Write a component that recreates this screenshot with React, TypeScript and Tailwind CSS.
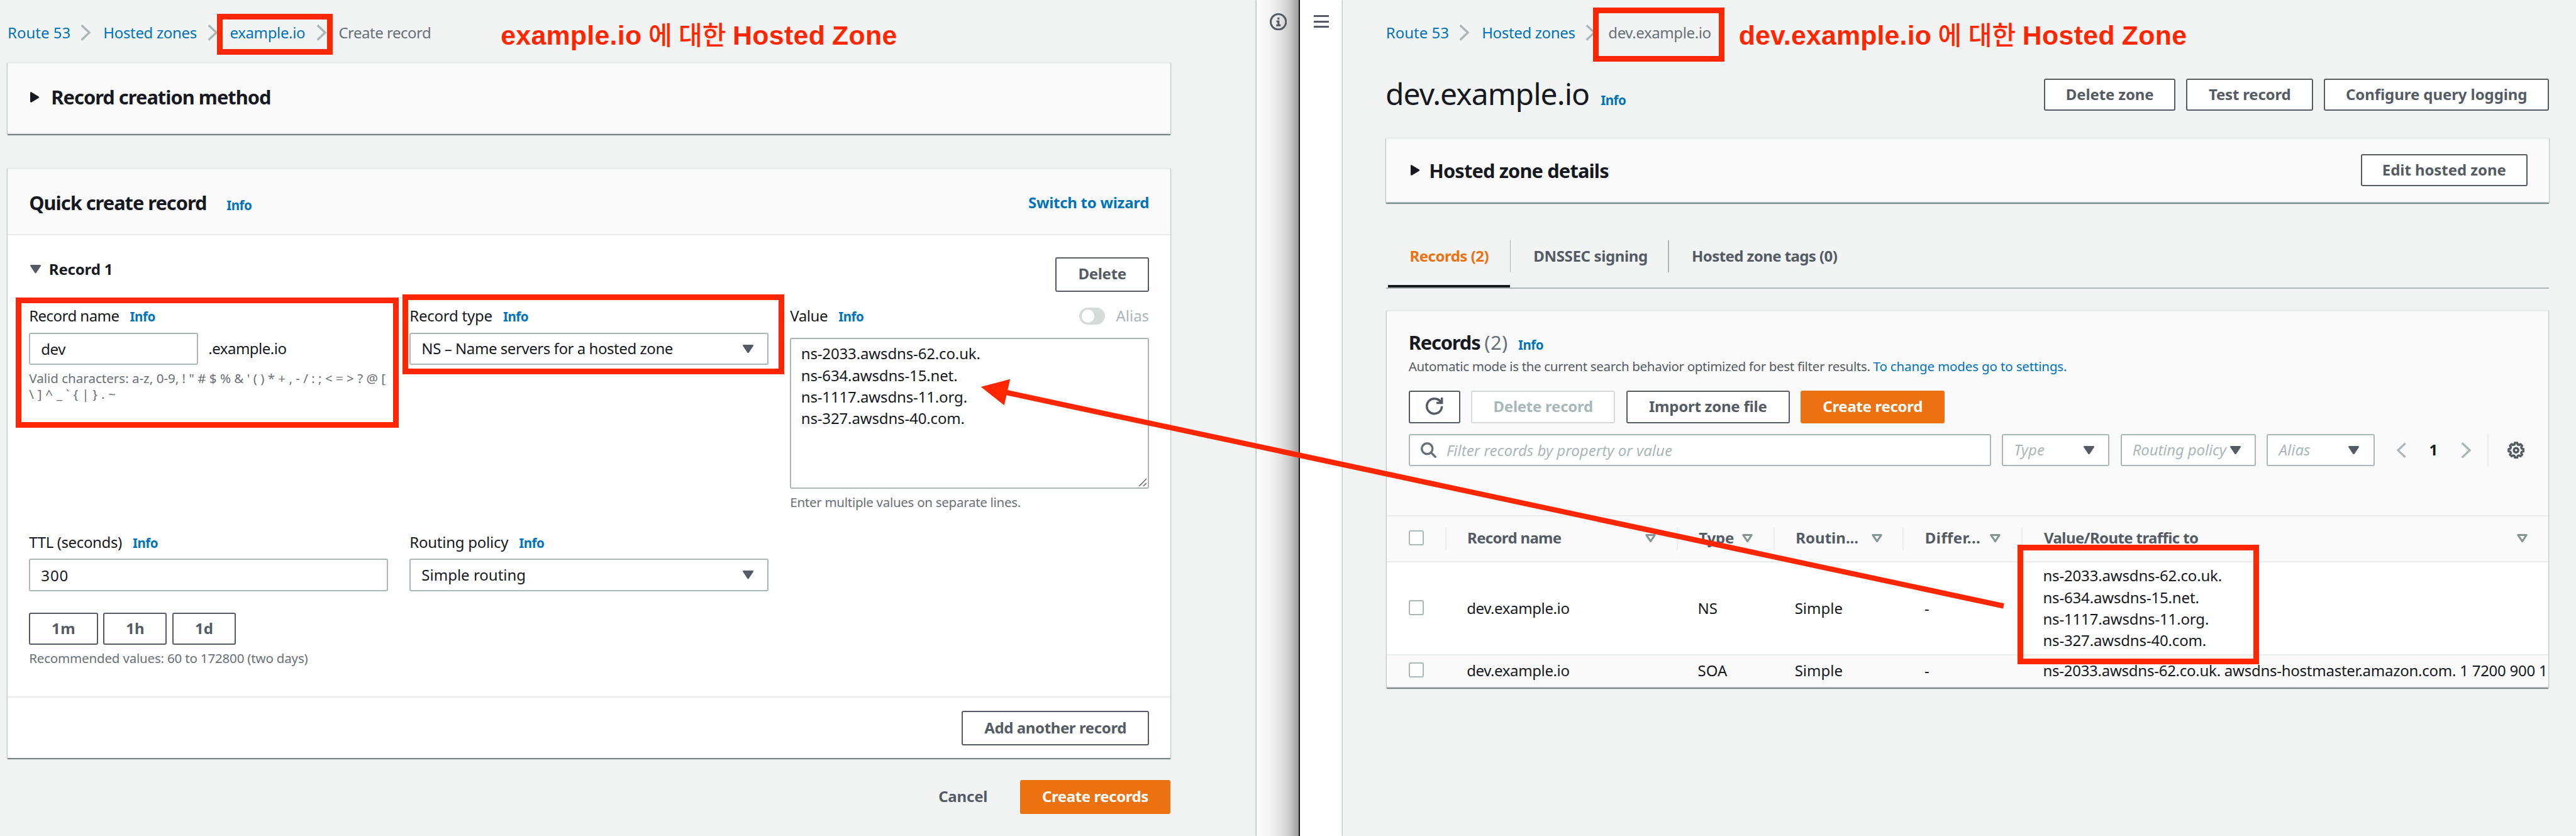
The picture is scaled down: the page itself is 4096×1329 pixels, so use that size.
import React from "react";
import type { ReactNode } from "react";

/* The page sets --spacing to 0.856187px, so one step of the spacing scale is one canvas unit. */

const NAME_SERVERS = [
  "ns-2033.awsdns-62.co.uk.",
  "ns-634.awsdns-15.net.",
  "ns-1117.awsdns-11.org.",
  "ns-327.awsdns-40.com.",
];

/* ---------- icons ---------- */

function ChevronRight({ className = "" }: { className?: string }) {
  return (
    <svg viewBox="0 0 20 30" className={`h-30 w-20 shrink-0 ${className}`} fill="none" stroke="#aab7b8" strokeWidth="4">
      <path d="M2 1.4 16.4 15 2 28.6" />
    </svg>
  );
}

function ChevronLeft() {
  return (
    <svg viewBox="0 0 20 30" className="h-30 w-19 shrink-0" fill="none" stroke="#aab7b8" strokeWidth="4">
      <path d="M18 1.4 3.6 15 18 28.6" />
    </svg>
  );
}

function CaretDown({ className = "" }: { className?: string }) {
  return (
    <svg viewBox="0 0 20 16" className={`h-16 w-20 shrink-0 ${className}`} fill="#545b64" stroke="#545b64" strokeWidth="3" strokeLinejoin="round">
      <path d="M1.6 1.5h16.8L10 14.2z" />
    </svg>
  );
}

function CaretRight() {
  return (
    <svg viewBox="0 0 17 20" className="h-20 w-17 shrink-0" fill="#16191f" stroke="#16191f" strokeWidth="3" strokeLinejoin="round">
      <path d="M1.5 1.8v16.4L15 10z" />
    </svg>
  );
}

function SortIcon() {
  return (
    <svg viewBox="0 0 20 16" className="h-16 w-20 shrink-0" fill="none" stroke="#879596" strokeWidth="3.6" strokeLinejoin="round">
      <path d="M2.2 1.8h15.6L10 13.6z" />
    </svg>
  );
}

function InfoIcon() {
  return (
    <svg viewBox="0 0 16 16" className="size-32" fill="none" stroke="#545b64" strokeWidth="1.8">
      <circle cx="8" cy="8" r="7.1" />
      <path d="M6.2 7.6H8.1V11.2M6 11.2h4.1M7.2 4.9h1.8" />
    </svg>
  );
}

function RefreshIcon() {
  return (
    <svg viewBox="0 0 16 16" className="size-32" fill="none" stroke="#545b64" strokeWidth="2">
      <path d="M10 5h5V0" />
      <path d="M15 8a6.957 6.957 0 0 1-7 7 6.957 6.957 0 0 1-7-7 6.957 6.957 0 0 1 7-7 6.87 6.87 0 0 1 6.3 4" />
    </svg>
  );
}

function SearchIcon() {
  return (
    <svg viewBox="0 0 30 30" className="size-30 shrink-0" fill="none" stroke="#687078" strokeWidth="4">
      <circle cx="12" cy="12" r="10" />
      <path d="m18.6 18.6 9.8 9.8" />
    </svg>
  );
}

const GEAR_POINTS = Array.from({ length: 8 }, (_, i) => i * 45)
  .flatMap((a) => [
    [11, a - 15],
    [14, a - 9],
    [14, a + 9],
    [11, a + 15],
  ])
  .map(([r, deg]) => {
    const t = (deg * Math.PI) / 180;
    return `${(16 + r * Math.cos(t)).toFixed(2)},${(16 + r * Math.sin(t)).toFixed(2)}`;
  })
  .join(" ");

function GearIcon() {
  return (
    <svg viewBox="0 0 32 32" className="size-32 shrink-0" fill="none" stroke="#545b64" strokeWidth="4" strokeLinejoin="round">
      <polygon points={GEAR_POINTS} />
      <circle cx="16" cy="16" r="4.1" />
    </svg>
  );
}

/* ---------- small pieces ---------- */

function Info({ className = "" }: { className?: string }) {
  return <span className={`text-[20.55px] font-bold tracking-[-0.5px] text-[#0073bb] ${className}`}>Info</span>;
}

const BUTTON_TONES = {
  normal: "border-[#545b64] bg-white text-[#545b64]",
  disabled: "border-[#d5dbdb] bg-white text-[#aab7b8]",
  primary: "border-[#ec7211] bg-[#ec7211] text-white",
};

function Button({
  children,
  tone = "normal",
  className = "h-60",
}: {
  children: ReactNode;
  tone?: keyof typeof BUTTON_TONES;
  className?: string;
}) {
  return (
    <button className={`flex shrink-0 items-center justify-center rounded-[3px] border-2 pb-2 font-bold ${BUTTON_TONES[tone]} ${className}`}>
      {children}
    </button>
  );
}

function Select({ children, className = "" }: { children: ReactNode; className?: string }) {
  return (
    <div className={`flex h-60 items-center justify-between rounded-[3px] border-2 border-[#aab7b8] bg-white pr-26 pl-20 ${className}`}>
      {children}
      <CaretDown />
    </div>
  );
}

function Card({ children, className = "" }: { children: ReactNode; className?: string }) {
  return (
    <section className={`border-t-2 border-[#eaeded] bg-white shadow-[0_2px_1px_0_rgba(0,28,36,0.42),1px_1px_2px_0_rgba(0,28,36,0.18),-1px_1px_2px_0_rgba(0,28,36,0.18)] ${className}`}>
      {children}
    </section>
  );
}

function Label({ children }: { children: ReactNode }) {
  return <div className="flex h-44 items-baseline gap-20 leading-44">{children}</div>;
}

function Checkbox() {
  return <span className="block size-28 rounded-[3px] border-2 border-[#aab7b8] bg-white" />;
}

/* ---------- left window: record form ---------- */

function RecordForm() {
  return (
    <main className="w-2334 shrink-0 bg-[#f2f3f3] pt-39 pl-14">
      <nav className="flex h-44 items-center leading-44">
        <a className="w-118 text-[#0073bb]">Route 53</a>
        <ChevronRight className="mr-22 ml-18" />
        <a className="w-175 tracking-[-0.35px] text-[#0073bb]">Hosted zones</a>
        <ChevronRight className="mr-22 ml-18" />
        <a className="w-142 tracking-[-0.37px] text-[#0073bb]">example.io</a>
        <ChevronRight className="mr-22 ml-18" />
        <span className="tracking-[-0.5px] text-[#687078]">Create record</span>
      </nav>

      <Card className="mt-33 w-2160">
        <div className="flex h-130 items-center gap-22 border-b-2 border-[#eaeded] bg-[#fafafa] pb-4 pl-42">
          <CaretRight />
          <h2 className="text-[30.8px] font-bold tracking-[-0.97px]">Record creation method</h2>
        </div>
      </Card>

      <Card className="mt-64 w-2160">
        <header className="flex h-122 items-center justify-between border-b-2 border-[#eaeded] bg-[#fafafa] px-40 pt-3">
          <div className="flex items-baseline gap-37">
            <h2 className="text-[30.8px] font-bold tracking-[-1.01px]">Quick create record</h2>
            <Info />
          </div>
          <a className="font-bold tracking-[-0.28px] text-[#0073bb]">Switch to wizard</a>
        </header>

        <div className="px-40 pt-41 pb-56">
          <div className="flex h-64 items-start justify-between">
            <div className="flex items-center gap-15 pl-2 leading-44">
              <CaretDown />
              <h3 className="font-bold tracking-[-0.18px]">Record 1</h3>
            </div>
            <Button className="h-64 w-174 tracking-[-0.29px]">Delete</Button>
          </div>

          <div className="mt-23 grid grid-cols-3 gap-x-40">
            <div>
              <Label>
                <span className="tracking-[-0.54px]">Record name</span>
                <Info />
              </Label>
              <div className="mt-9 flex h-60 items-center">
                <div className="flex h-60 w-314 items-center rounded-[3px] border-2 border-[#aab7b8] bg-white pt-2 pl-20 tracking-[-0.5px]">dev</div>
                <span className="ml-19 tracking-[-0.51px]">.example.io</span>
              </div>
              <p className="mt-10 text-[20.55px] leading-30 text-[#687078]">
                {"Valid characters: a-z, 0-9, ! \" # $ % & ' ( ) * + , - / : ; < = > ? @ ["}
                <br />
                <span className="tracking-[0.25px]">{"\\ ] ^ _ ` { | } . ~"}</span>
              </p>
            </div>

            <div>
              <Label>
                <span className="tracking-[-0.23px]">Record type</span>
                <Info />
              </Label>
              <Select className="mt-9">
                <span className="tracking-[-0.44px]">NS – Name servers for a hosted zone</span>
              </Select>
            </div>

            <div>
              <div className="flex items-center justify-between">
                <Label>
                  <span className="tracking-[-0.42px]">Value</span>
                  <Info />
                </Label>
                <div className="flex items-center gap-20 text-[#aab7b8]">
                  <span className="flex h-32 w-48 items-center rounded-full bg-[#d5dbdb] pl-4">
                    <span className="size-24 rounded-full bg-white" />
                  </span>
                  Alias
                </div>
              </div>
              <div className="mt-19 flex h-280 items-start justify-between rounded-[3px] border-2 border-[#aab7b8] bg-white pt-7 pl-18">
                <div className="leading-40 tracking-[-0.14px]">
                  {NAME_SERVERS.map((ns) => (
                    <div key={ns}>{ns}</div>
                  ))}
                </div>
                <svg viewBox="0 0 16 16" className="mr-2 mb-2 size-16 self-end" stroke="#545b64" strokeWidth="1.6">
                  <path d="M1 15.5 15.5 1M9 15.5l6.5-6.5" />
                </svg>
              </div>
              <p className="mt-10 text-[20.55px] leading-30 tracking-[-0.3px] text-[#687078]">Enter multiple values on separate lines.</p>
            </div>
          </div>

          <div className="mt-37 grid grid-cols-3 gap-x-40">
            <div>
              <Label>
                <span className="tracking-[-0.38px]">TTL (seconds)</span>
                <Info />
              </Label>
              <div className="mt-9 flex h-60 items-center rounded-[3px] border-2 border-[#aab7b8] bg-white pt-2 pl-20 tracking-[0.9px]">300</div>
              <div className="mt-40 flex gap-10">
                <Button className="h-60 w-128 tracking-[0.4px]">1m</Button>
                <Button className="h-60 w-118">1h</Button>
                <Button className="h-60 w-118">1d</Button>
              </div>
              <p className="mt-10 text-[20.55px] leading-30 tracking-[-0.2px] text-[#687078]">Recommended values: 60 to 172800 (two days)</p>
            </div>
            <div>
              <Label>
                <span className="tracking-[-0.25px]">Routing policy</span>
                <Info />
              </Label>
              <Select className="mt-9">Simple routing</Select>
            </div>
          </div>
        </div>

        <footer className="flex justify-end border-t-2 border-[#eaeded] px-40 py-24">
          <Button className="h-64 w-348 tracking-[-0.39px]">Add another record</Button>
        </footer>
      </Card>

      <div className="mt-40 flex w-2160 items-center justify-end gap-60 font-bold">
        <span className="pb-2 tracking-[-0.19px] text-[#545b64]">Cancel</span>
        <Button tone="primary" className="h-64 w-280 tracking-[-0.42px]">
          Create records
        </Button>
      </div>
    </main>
  );
}

/* ---------- right window: hosted zone ---------- */

function HeaderCell({ children, className = "border-r-2" }: { children: ReactNode; className?: string }) {
  return (
    <div className={`flex h-42 items-center justify-between border-[#eaeded] pr-38 pb-3 pl-39 ${className}`}>
      {children}
      <SortIcon />
    </div>
  );
}

function RecordRow({ type, value, className = "" }: { type: string; value: ReactNode; className?: string }) {
  return (
    <div className={`grid grid-cols-[94.2px_368.2px_154.1px_205.5px_188.4px_1fr] items-center border-b-2 border-[#eaeded] ${className}`}>
      <div className="pb-2 pl-40">
        <Checkbox />
      </div>
      <div className="pl-38 tracking-[-0.39px]">dev.example.io</div>
      <div className="pl-37">{type}</div>
      <div className="pl-37">Simple</div>
      <div className="pl-38">-</div>
      <div className="overflow-hidden pl-38">{value}</div>
    </div>
  );
}

function HostedZone() {
  return (
    <main className="min-w-0 flex-1 bg-[#f2f3f3] pt-39 pr-50 pl-80 shadow-[-1px_0_2px_0_rgba(0,28,36,0.35)]">
      <nav className="flex h-44 items-center leading-44">
        <a className="w-118 text-[#0073bb]">Route 53</a>
        <ChevronRight className="mr-22 ml-18" />
        <a className="w-175 tracking-[-0.35px] text-[#0073bb]">Hosted zones</a>
        <ChevronRight className="mr-22 ml-18" />
        <span className="tracking-[-0.39px] text-[#687078]">dev.example.io</span>
      </nav>

      <div className="mt-55 flex h-118 items-start justify-between">
        <div className="-ml-1 flex items-baseline gap-21 leading-72">
          <h1 className="text-[48px] tracking-[-0.95px]">dev.example.io</h1>
          <Info />
        </div>
        <div className="mt-8 flex gap-20">
          <Button className="h-60 w-244 tracking-[-0.14px]">Delete zone</Button>
          <Button className="h-60 w-236 tracking-[-0.19px]">Test record</Button>
          <Button className="h-60 w-418 tracking-[-0.08px]">Configure query logging</Button>
        </div>
      </div>

      <Card>
        <div className="flex h-118 items-center justify-between border-b-2 border-[#eaeded] bg-[#fafafa] pr-40 pl-46">
          <div className="flex items-center gap-17">
            <CaretRight />
            <h2 className="text-[30.8px] font-bold tracking-[-0.86px]">Hosted zone details</h2>
          </div>
          <Button className="h-60 w-310 tracking-[-0.07px]">Edit hosted zone</Button>
        </div>
      </Card>

      <div className="mt-40 flex h-120 items-stretch border-b-2 border-[#aab7b8] pl-4 leading-44 font-bold text-[#545b64]">
        <div className="w-226 border-b-4 border-[#16191f] pt-37 pl-40 tracking-[-0.49px] text-[#ec7211]">Records (2)</div>
        <div className="mt-30 h-60 w-2 bg-[#aab7b8]" />
        <div className="w-292 pt-37 pl-42 tracking-[-0.36px]">DNSSEC signing</div>
        <div className="mt-30 h-60 w-2 bg-[#aab7b8]" />
        <div className="pt-37 pl-42 tracking-[-0.58px]">Hosted zone tags (0)</div>
      </div>

      <Card className="mx-2 mt-40">
        <header className="h-378 bg-[#fafafa] px-40 pt-36">
          <div className="flex h-44 items-baseline leading-44">
            <h2 className="text-[30.8px] font-bold tracking-[-1.15px]">Records</h2>
            <span className="ml-8 text-[30.8px] tracking-[0.4px] text-[#687078]">(2)</span>
            <Info className="ml-19" />
          </div>
          <p className="mt-6 h-32 text-[20.55px] leading-32 text-[#545b64]">
            <span className="tracking-[-0.34px]">Automatic mode is the current search behavior optimized for best filter results. </span>
            <a className="tracking-[-0.17px] text-[#0073bb]">To change modes go to settings.</a>
          </p>

          <div className="mt-29 flex gap-20">
            <Button className="h-60 w-96">
              <RefreshIcon />
            </Button>
            <Button tone="disabled" className="h-60 w-268 tracking-[-0.25px]">
              Delete record
            </Button>
            <Button className="h-60 w-304 tracking-[-0.23px]">Import zone file</Button>
            <Button tone="primary" className="h-60 w-268 tracking-[-0.31px]">
              Create record
            </Button>
          </div>

          <div className="mt-20 flex h-60 items-center">
            <div className="flex h-60 w-1082 items-center gap-18 rounded-[3px] border-2 border-[#aab7b8] bg-white pl-20">
              <SearchIcon />
              <span className="pt-2 text-[#aab7b8] italic">Filter records by property or value</span>
            </div>
            <Select className="ml-20 w-200">
              <span className="text-[#aab7b8] italic">Type</span>
            </Select>
            <Select className="ml-20 w-252">
              <span className="tracking-[-0.15px] text-[#aab7b8] italic">Routing policy</span>
            </Select>
            <Select className="ml-20 w-200">
              <span className="text-[#aab7b8] italic">Alias</span>
            </Select>
            <div className="ml-40 flex items-center">
              <ChevronLeft />
              <span className="w-101 text-center font-bold">1</span>
              <ChevronRight />
            </div>
            <div className="ml-30 h-60 w-2 bg-[#eaeded]" />
            <div className="ml-35">
              <GearIcon />
            </div>
          </div>
        </header>

        <div className="grid h-88 grid-cols-[94.2px_368.2px_154.1px_205.5px_188.4px_1fr] items-center border-y-2 border-[#eaeded] bg-[#fafafa] font-bold text-[#545b64]">
          <div className="flex h-42 items-center border-r-2 border-[#eaeded] pb-5 pl-40">
            <Checkbox />
          </div>
          <HeaderCell>
            <span className="tracking-[-0.67px]">Record name</span>
          </HeaderCell>
          <HeaderCell>
            <span className="tracking-[-0.2px]">Type</span>
          </HeaderCell>
          <HeaderCell>Routin...</HeaderCell>
          <HeaderCell>
            <span className="tracking-[0.4px]">Differ...</span>
          </HeaderCell>
          <HeaderCell className="border-r-0">
            <span className="ml-1 tracking-[-0.61px]">Value/Route traffic to</span>
          </HeaderCell>
        </div>

        <RecordRow
          className="h-172 bg-white"
          type="NS"
          value={
            <div className="leading-40 tracking-[-0.16px]">
              {NAME_SERVERS.map((ns) => (
                <div key={ns}>{ns}</div>
              ))}
            </div>
          }
        />
        <RecordRow
          className="h-60 bg-[#fafafa]"
          type="SOA"
          value={<span className="tracking-[-0.25px]">{"ns-2033.awsdns-62.co.uk. awsdns-hostmaster.amazon.com. 1 7200 900 1"}</span>}
        />
      </Card>
    </main>
  );
}

/* ---------- red annotations drawn over both windows ---------- */

function Caption({ domain, className }: { domain: ReactNode; className: string }) {
  return (
    <div className={`absolute top-36 font-['Liberation_Sans','Noto_Sans_CJK_KR',sans-serif] text-[42.8px] leading-60 font-bold text-[#ff2600] [word-spacing:-1.4px] ${className}`}>
      {domain} <span className="text-[41px] font-medium">에</span> <span className="text-[41px] font-medium">대한</span>{" "}
      <span className="tracking-[0.36px]">Hosted Zone</span>
    </div>
  );
}

function Annotations() {
  return (
    <div className="absolute inset-0">
      <div className="absolute top-26 left-403 h-76 w-215 border-[9px] border-[#ff2600]" />
      <div className="absolute top-552 left-29 h-242 w-712 border-[9px] border-[#ff2600]" />
      <div className="absolute top-547 left-747 h-148 w-709 border-[9px] border-[#ff2600]" />
      <div className="absolute top-14 left-2959 h-100 w-244 border-[9px] border-[#ff2600]" />
      <div className="absolute top-1011 left-3747 h-222 w-448 border-[9px] border-[#ff2600]" />
      <Caption className="left-930" domain={<span className="tracking-[0.29px]">example.io</span>} />
      <Caption className="left-3229" domain={<span className="tracking-[0.2px]">dev.example.io</span>} />
      <svg viewBox="0 0 4784 1552" preserveAspectRatio="none" className="absolute inset-0 size-full">
        <path d="M1866 728 3721 1125" stroke="#ff2600" strokeWidth="9.8" />
        <path d="M1821.7 718.3 1876 704 1865 752.3z" fill="#ff2600" />
      </svg>
    </div>
  );
}

export default function App() {
  return (
    <div className="relative flex h-[1329px] w-[4096px] overflow-hidden bg-[#f2f3f3] font-['Noto_Sans',sans-serif] text-[24px] whitespace-nowrap text-[#16191f] [--spacing:0.856187px]">
      <RecordForm />
      <aside className="flex w-80 shrink-0 justify-center border-r-2 border-[#1a1a1a] bg-[linear-gradient(to_right,#fdfdfd_0%,#f4f4f4_30%,#e2e2e2_58%,#c8c8c8_80%,#9a9a9a_100%)] pt-24 pl-2 shadow-[-1px_0_2px_0_rgba(0,28,36,0.35)]">
        <InfoIcon />
      </aside>
      <aside className="flex w-80 shrink-0 flex-col items-center gap-6 bg-white pt-28">
        <span className="h-4 w-28 bg-[#545b64]" />
        <span className="h-4 w-28 bg-[#545b64]" />
        <span className="h-4 w-28 bg-[#545b64]" />
      </aside>
      <HostedZone />
      <Annotations />
    </div>
  );
}
